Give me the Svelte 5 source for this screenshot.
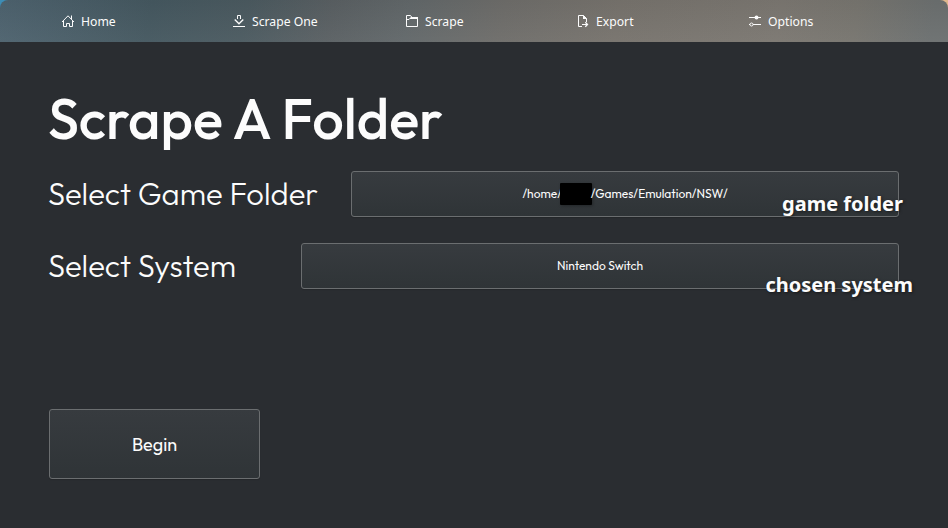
<script>
  const nav = [
    { icon: 'home', label: 'Home' },
    { icon: 'download', label: 'Scrape One' },
    { icon: 'folder', label: 'Scrape' },
    { icon: 'export', label: 'Export' },
    { icon: 'options', label: 'Options' }
  ];
</script>

<div class="window">
  <div class="bar">
    <nav>
      {#each nav as item}
        <a href="#{item.icon}">
          <svg width="14" height="14" viewBox="0 0 14 14" fill="none" stroke="currentColor">
            {#if item.icon === 'home'}
              <path d="M1 8 7 1.8 13 8M2.5 6.5v6h3v-3h3v3h3v-6M10.5 1.5v4" />
            {:else if item.icon === 'download'}
              <path d="M1 12.5h12M5.5 5V1.5h3V5" />
              <path d="M2.7 5.5 7 9.8l4.3-4.3" stroke-width="1.3" />
            {:else if item.icon === 'folder'}
              <path d="M1.5 12.5v-11h4l1.5 2h5.5v9zM1.5 5.5H4l2-2" />
              <path d="M6 3h7v2H4.5z" fill="currentColor" stroke="none" />
            {:else if item.icon === 'export'}
              <path d="M6 12.5H2.5v-11h5l3 3V8M6 10.5h5.5" />
              <path d="M9.3 8.3l2.2 2.2-2.2 2.2" stroke-width="1.3" />
              <path d="M7 1v4h4z" fill="currentColor" stroke="none" />
            {:else}
              <path d="M1 3.5h12M5 10.5h8M1 10.5h1" />
              <circle cx="8.5" cy="3.5" r="2" fill="currentColor" stroke="none" />
              <circle cx="3.5" cy="10.5" r="1.5" />
            {/if}
          </svg>
          <span>{item.label}</span>
        </a>
      {/each}
    </nav>
  </div>

  <main>
    <h1>Scrape A Folder</h1>
    <div class="row">
      <span class="label folder-label">Select Game Folder</span>
      <button class="field folder">
        <span class="path">/home/<i></i>/Games/Emulation/NSW/</span>
        <b class="note">game folder</b>
      </button>
    </div>
    <div class="row">
      <span class="label system-label">Select System</span>
      <button class="field system">
        <span class="name">Nintendo Switch</span>
        <b class="note">chosen system</b>
      </button>
    </div>
    <button class="begin"><span>Begin</span></button>
  </main>
</div>

<style>
  :global(body) { background: #2a2d31; }
  .window {
    width: 948px;
    height: 528px;
    overflow: hidden;
    box-sizing: border-box;
    background: #2a2d31;
    color: #fcfcfc;
    font-family: Outfit, Lato, sans-serif;
  }
  .bar { height: 42px; background: linear-gradient(90deg, #3d8db5 50%, #dfb78d 50%); }
  nav {
    height: 42px;
    box-sizing: border-box;
    padding-left: 61px;
    display: grid;
    grid-template-columns: 171px 173px 171px 172px 172px;
    align-items: center;
    border-radius: 8px 8px 0 0;
    background:
      linear-gradient(180deg, rgba(0, 0, 0, 0.04), rgba(255, 255, 255, 0.03)),
      linear-gradient(100deg, #4e636f 0, #455860 16%, #4b5a60 26%, #5a6063 35%, #62686a 43%, #6e6d6a 53%, #77736d 65%, #7b7771 82%, #77756f 90%, #6c7070 98%);
  }
  a {
    display: flex;
    align-items: center;
    gap: 6px;
    color: #fcfcfc;
    text-decoration: none;
    font: 12.2px/16px "Noto Sans", sans-serif;
  }
  a span { padding-top: 2px; }
  svg { flex: none; }
  main { padding: 48px 49px 0; }
  h1 {
    margin: 0 0 0 -1px;
    height: 59px;
    line-height: 58px;
    font-size: 56px;
    font-weight: 500;
    white-space: nowrap;
  }
  .row { display: flex; height: 46px; margin-top: 26px; }
  h1 + .row { margin-top: 22px; }
  .label {
    flex: none;
    margin-left: -1px;
    font-size: 31px;
    font-weight: 300;
    line-height: 46px;
    white-space: nowrap;
  }
  .folder-label { width: 303px; }
  .system-label { width: 253px; }
  button {
    box-sizing: border-box;
    position: relative;
    padding: 0;
    display: flex;
    align-items: center;
    justify-content: center;
    border: 1px solid #6b6e70;
    border-radius: 3px;
    background: linear-gradient(#373b3f, #2f3437);
    box-shadow: 0 1px 1px rgba(0, 0, 0, 0.15);
    color: #fcfcfc;
    font-family: inherit;
    white-space: nowrap;
  }
  .field { flex: 1; font-size: 12px; }
  .path, .name { padding-bottom: 1px; }
  .path { display: flex; align-items: center; }
  i {
    width: 32px;
    height: 22px;
    margin: 0 -1px 0 -2px;
    border-radius: 1px;
    background: #000;
    box-shadow: 1px 1px 3px rgba(0, 0, 0, 0.3);
  }
  .note {
    position: absolute;
    font: bold 20px/26px "Noto Sans", sans-serif;
    text-shadow: 1px 1px 3px rgba(0, 0, 0, 0.5);
  }
  .folder .note { right: -5px; top: 19px; }
  .system .note { right: -15px; top: 28px; }
  .begin { width: 211px; height: 70px; margin-top: 120px; font-size: 18px; }
</style>
